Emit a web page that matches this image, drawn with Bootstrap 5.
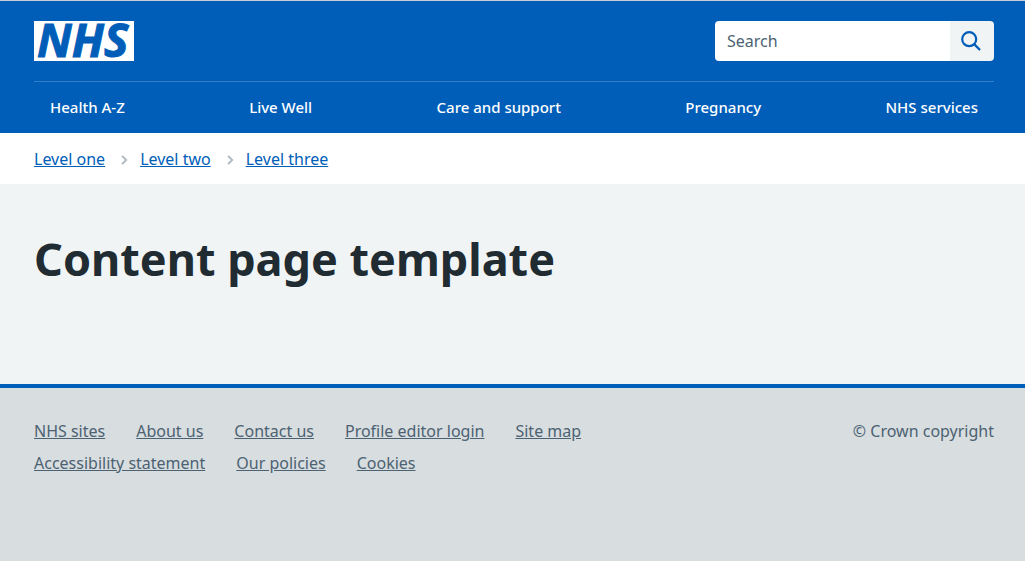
<!DOCTYPE html>
<html lang="en">
<head>
<meta charset="utf-8">
<meta name="viewport" content="width=device-width, initial-scale=1">
<title>Content page template</title>
<link href="https://cdn.jsdelivr.net/npm/bootstrap@5.3.0/dist/css/bootstrap.min.css" rel="stylesheet">
<style>
  body { font-family: "Noto Sans", "Open Sans", sans-serif; font-size: 16px; line-height: 24px; color: #212b32; background: #d8dde0; }
  .page-width { padding-left: 34px; padding-right: 31px; }
  .site-header { background: #005eb8; border-top: 1px solid #c8ced3; }
  .brand-logo { width: 100px; height: 40px; background: #fff; color: #005eb8; font-family: "Open Sans", "Noto Sans", sans-serif; font-size: 46px; font-weight: 700; font-style: italic; }
  .brand-logo svg { display: block; overflow: visible; }
  .site-search { width: 279px; height: 40px; }
  .site-search .form-control { border: 0; border-radius: 4px 0 0 4px; padding: 0 12px; font-size: 16px; color: #212b32; }
  .site-search .form-control::placeholder { color: #4c6272; opacity: 1; }
  .site-search .btn { width: 44px; border: 0; border-radius: 0 4px 4px 0; background: #f0f4f5; }
  .main-nav { border-top: 1px solid #337ec6; }
  .main-nav .nav-link { color: #fff; font-size: 15px; font-weight: 500; padding: 13px 16px 14px; }
  .crumbs { background: #fff; padding-top: 14px; padding-bottom: 13px; }
  .crumbs a { color: #005eb8; }
  .crumbs svg { margin: 2px 8px 0 15px; }
  .page-main { background: #f0f4f5; padding-top: 47px; padding-bottom: 97px; }
  .page-main h1 { font-size: 45px; line-height: 56px; font-weight: 700; }
  .site-footer { border-top: 4px solid #005eb8; background: #d8dde0; color: #4c6272; padding-top: 31px; padding-bottom: 64px; }
  .site-footer a { color: #4c6272; }
  .footer-links { max-width: 640px; column-gap: 31px; row-gap: 8px; }
</style>
</head>
<body>
<header class="site-header">
  <div class="container-fluid page-width">
    <div class="d-flex flex-wrap justify-content-between gap-3 py-3 my-1">
      <a class="brand-logo" href="#" aria-label="NHS homepage">
        <svg width="100" height="40" viewBox="0 0 100 40" fill="currentColor" stroke="currentColor" stroke-width="1"><text x="3" y="36">NHS</text></svg>
      </a>
      <form class="site-search d-flex" role="search">
        <label class="visually-hidden" for="search-field">Search</label>
        <input class="form-control" id="search-field" type="search" placeholder="Search">
        <button class="btn d-flex flex-shrink-0 align-items-center justify-content-center p-0" type="submit" aria-label="Search">
          <svg width="24" height="22" viewBox="0 0 24 22" fill="none" stroke="#005eb8" stroke-width="2.2" stroke-linecap="round"><circle cx="9.2" cy="9.2" r="7"/><path d="M14.4 14.4 19.4 19.4"/></svg>
        </button>
      </form>
    </div>
    <nav class="main-nav" aria-label="Primary navigation">
      <ul class="nav justify-content-between">
        <li class="nav-item"><a class="nav-link" href="#">Health A-Z</a></li>
        <li class="nav-item"><a class="nav-link" href="#">Live Well</a></li>
        <li class="nav-item"><a class="nav-link" href="#">Care and support</a></li>
        <li class="nav-item"><a class="nav-link" href="#">Pregnancy</a></li>
        <li class="nav-item"><a class="nav-link" href="#">NHS services</a></li>
      </ul>
    </nav>
  </div>
</header>
<nav class="crumbs" aria-label="Breadcrumb">
  <div class="container-fluid page-width">
    <ol class="list-unstyled d-flex flex-wrap align-items-center mb-0">
      <li><a href="#">Level one</a></li>
      <li class="d-flex align-items-center"><svg width="12" height="12" viewBox="0 0 12 12" fill="none" stroke="#aeb7bd" stroke-width="1.8" aria-hidden="true"><path d="M2 1.8 6.2 6 2 10.2"/></svg><a href="#">Level two</a></li>
      <li class="d-flex align-items-center"><svg width="12" height="12" viewBox="0 0 12 12" fill="none" stroke="#aeb7bd" stroke-width="1.8" aria-hidden="true"><path d="M2 1.8 6.2 6 2 10.2"/></svg><a href="#">Level three</a></li>
    </ol>
  </div>
</nav>
<main class="page-main">
  <div class="container-fluid page-width">
    <h1 class="mb-0">Content page template</h1>
  </div>
</main>
<footer class="site-footer">
  <div class="container-fluid page-width d-flex justify-content-between">
    <ul class="footer-links list-unstyled d-flex flex-wrap mb-0">
      <li><a href="#">NHS sites</a></li>
      <li><a href="#">About us</a></li>
      <li><a href="#">Contact us</a></li>
      <li><a href="#">Profile editor login</a></li>
      <li><a href="#">Site map</a></li>
      <li><a href="#">Accessibility statement</a></li>
      <li><a href="#">Our policies</a></li>
      <li><a href="#">Cookies</a></li>
    </ul>
    <p class="mb-0 text-nowrap">© Crown copyright</p>
  </div>
</footer>
<script src="https://cdn.jsdelivr.net/npm/bootstrap@5.3.0/dist/js/bootstrap.bundle.min.js"></script>
</body>
</html>
